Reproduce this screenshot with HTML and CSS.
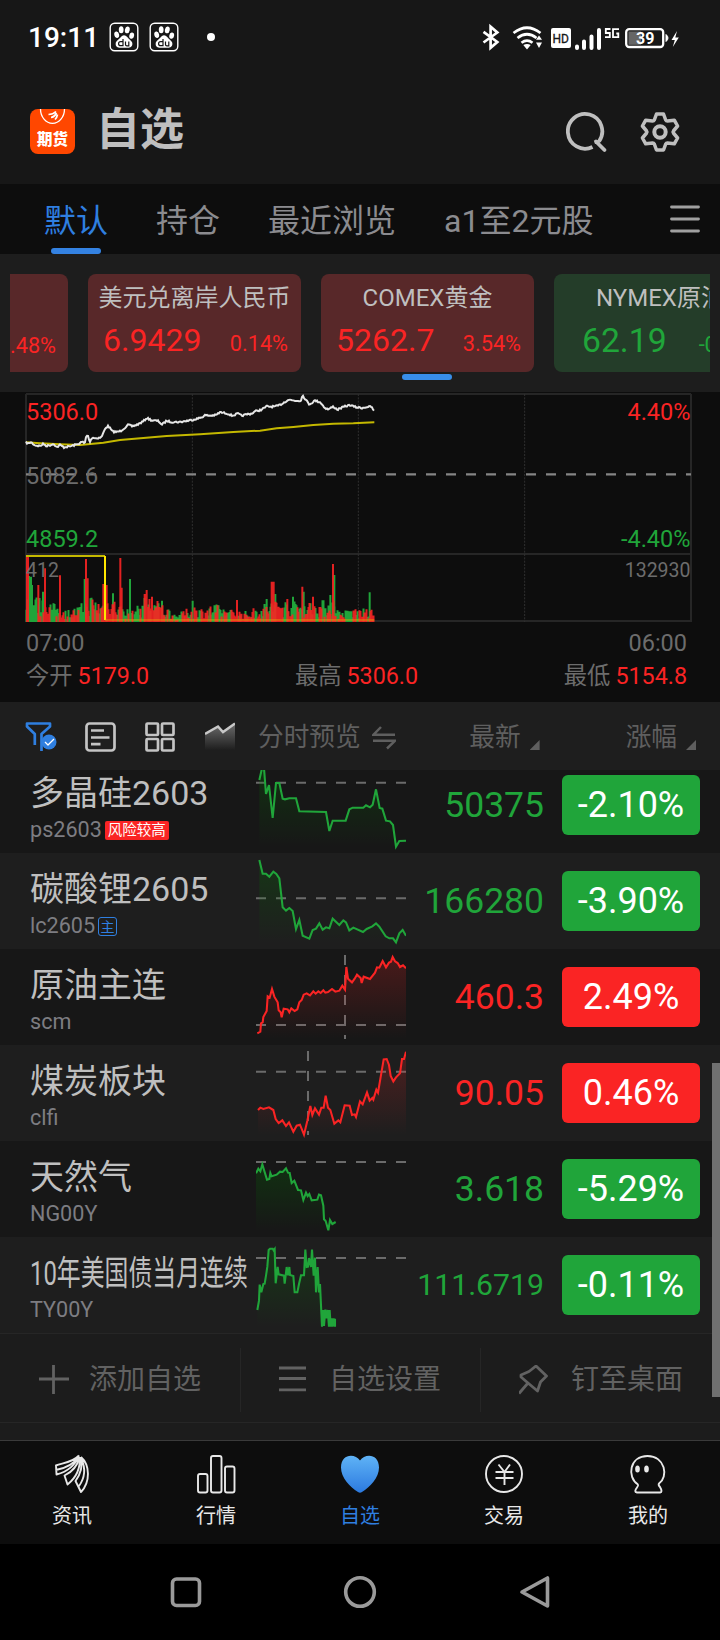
FILE: index.html
```html
<!DOCTYPE html>
<html lang="zh-CN">
<head>
<meta charset="utf-8">
<title>自选</title>
<link rel="stylesheet" href="styles.css">
</head>
<body>
<svg class="defs" width="0" height="0">
  <defs>
    <linearGradient id="gUp" x1="0" y1="0" x2="0" y2="1"><stop offset="0" stop-color="#fa2424" stop-opacity=".22"/><stop offset="1" stop-color="#fa2424" stop-opacity="0"/></linearGradient>
    <linearGradient id="gDown" x1="0" y1="0" x2="0" y2="1"><stop offset="0" stop-color="#007a00" stop-opacity=".26"/><stop offset="1" stop-color="#007a00" stop-opacity="0"/></linearGradient>
    <linearGradient id="gTrend" x1="0" y1="0" x2="0" y2="1"><stop offset="0" stop-color="#888" stop-opacity=".75"/><stop offset="1" stop-color="#888" stop-opacity="0"/></linearGradient>
    <linearGradient id="gHeart" x1="0" y1="0" x2="0" y2="1"><stop offset="0" stop-color="#5fb3f6"/><stop offset="1" stop-color="#2c7ae0"/></linearGradient>
    <symbol id="paw" viewBox="0 0 30 30">
      <rect x="1.2" y="1.2" width="27.6" height="27.6" rx="4.5" fill="none" stroke="#fff" stroke-width="1.4"/>
      <g fill="#fff">
        <ellipse cx="7.7" cy="12.8" rx="2.4" ry="3.3" transform="rotate(-12 7.7 12.8)"/>
        <ellipse cx="12.2" cy="7.8" rx="2.4" ry="3.5"/>
        <ellipse cx="18.3" cy="7.9" rx="2.4" ry="3.4" transform="rotate(12 18.3 7.9)"/>
        <ellipse cx="22.7" cy="13.6" rx="2.4" ry="3.2" transform="rotate(10 22.7 13.6)"/>
        <path d="M15 13.200c2.600 0 3.600 2.400 5.300 4 1.800 1.700 3.600 2.800 3 5.600-.8 3.600-4.600 3-8.300 3s-7.700.5-8.300-3c-.5-2.800 1.400-4.100 3.200-5.700 1.700-1.500 2.500-3.900 5.100-3.900z"/>
      </g>
      <path d="M14 17v6.700h-2.400a2 2 0 0 1 0-4H14M16.500 19.500v3q0 1.300 1.400 1.300h1.900v-4.300" fill="none" stroke="#171717" stroke-width="1.200"/>
    </symbol>
  </defs>
</svg>

<header class="status">
  <span class="clock">19:11</span>
  <svg class="paw" width="30" height="30"><use href="#paw"/></svg>
  <svg class="paw" width="30" height="30"><use href="#paw"/></svg>
  <span class="dot"></span>
  <svg class="status-icons" width="200" height="30" viewBox="0 0 200 30" fill="none" stroke="#fff">
    <path d="M3.500 9.800 17.300 20l-6.700 5.800V4.700l6.700 5.800L3.500 20.500" stroke-width="2.700"/>
    <path d="M33.500 11q13.500-10.500 27 0M37.500 16q9.500-7.500 19 0M41.500 20.700q5.500-4.200 11 0" stroke-width="2.700"/>
    <path d="M43.300 23q3.700-2 7.400 0L47 27.500zM56 17.800l3-4.300 3 4.300zM56 20.500l3 5.500 3-5.500z" fill="#fff" stroke="none"/>
    <rect x="71" y="6" width="20" height="20" rx="2" fill="#fff" stroke="none"/>
    <text x="72.500" y="20.500" class="hd">HD</text>
    <path d="M97 24.500v1.500M104 19.500v6.500M111.500 14.500V26M119 8v18" stroke-width="4" stroke-linecap="round"/>
    <path d="M130.500 7h-4.700v4h4v4.200H125M139 7.200h-6v8h5.300V11.500h-2" stroke-width="1.800"/>
    <rect x="146.200" y="7.200" width="37" height="17.800" rx="3" stroke-width="2.300"/>
    <rect x="148.500" y="9.500" width="12.500" height="13.300" fill="#666" stroke="none"/>
    <text x="156" y="21.700" class="batt">39</text>
    <path d="M186 12.500q4 3.500 0 7z" fill="#fff"/>
    <path d="M197 9l-5.500 9h3.300l-2 7 6-9.500h-3.500z" fill="#fff" stroke="none"/>
  </svg>
</header>

<section class="head">
  <div class="app-icon">
    <svg width="45" height="20" viewBox="0 0 45 20" fill="none" stroke="#fff">
      <path d="M10.500 0a12 14.300 0 0 0 24 0" stroke-width="1.300"/>
      <path d="M26 2.500q-3 3-7.500 3M26.500 4q-2 4-5.500 4.500M27.500 5.500q-.5 3-2.500 5" stroke-width="1.700"/>
    </svg>
    <b>期货</b>
  </div>
  <h1>自选</h1>
  <svg class="search" width="42" height="42" viewBox="0 0 42 42" fill="none" stroke="#bfbfbf" stroke-width="3.800">
    <path d="M26.500 36A17.200 17.400 0 1 1 33 30.500"/>
    <path d="M30 30.500 38.500 39" stroke-linecap="round"/><path d="M28.800 31h5"/>
  </svg>
  <svg class="gear" width="40" height="40" viewBox="0 0 40 40" fill="none" stroke="#bfbfbf" stroke-width="3.500">
    <path stroke-linejoin="round" d="M16.500 2h7l2.200 6q.5 1 1.700 1l6.900-.8 3.300 5.800-4.200 5q-.8 1 0 2l4.200 5-3.300 5.800-6.900-.8q-1.200 0-1.700 1l-2.200 6h-7l-2.200-6q-.5-1-1.700-1l-6.900.8L2.400 26l4.200-5q.8-1 0-2l-4.200-5 3.300-5.800 6.900.8q1.200 0 1.700-1z"/>
    <circle cx="20" cy="20" r="5.700" stroke-width="4"/>
  </svg>
</section>

<nav class="tabs">
  <span class="tab on">默认</span>
  <span class="tab">持仓</span>
  <span class="tab">最近浏览</span>
  <span class="tab">a1至2元股</span>
  <svg class="menu" width="30" height="28" viewBox="0 0 30 28" stroke="#a0a0a0" stroke-width="2.800" stroke-linecap="round"><path d="M1.500 2h27M1.500 14h27M1.500 26h27"/></svg>
</nav>

<section class="ticker">
  <div class="cards">
    <div class="card up first"><p><i>.48%</i></p></div>
    <div class="card up"><h3>美元兑离岸人民币</h3><p><b>6.9429</b><i>0.14%</i></p></div>
    <div class="card up"><h3>COMEX黄金</h3><p><b>5262.7</b><i>3.54%</i></p></div>
    <div class="card down"><h3>NYMEX原油</h3><p><b>62.19</b><i>-0</i></p></div>
  </div>
  <span class="pager"></span>
</section>

<section class="quote">
  <div class="plot">
    <svg id="plot" width="720" height="230" viewBox="0 21 2160 690" fill="none">
      <g stroke="#262626" stroke-width="6"><path d="M78 27H2073M78 507H2073M78 708H2073M78 27V711M2073 27V711"/></g>
      <path d="M577 27V711M1075 27V711M1574 27V711" stroke="#303030" stroke-width="3" stroke-dasharray="6 4"/>
      <path d="M78 268H2073" stroke="#858585" stroke-width="7" stroke-dasharray="30 30"/>
    </svg>
    <span class="lab l t1 up-t">5306.0</span><span class="lab r t1 up-t">4.40%</span>
    <span class="lab l t2">5082.6</span>
    <span class="lab l t3 down-t">4859.2</span><span class="lab r t3 down-t">-4.40%</span>
    <span class="lab l t4 small">412</span><span class="lab r t4 small">132930</span>
  </div>
  <div class="axis"><span>07:00</span><span>06:00</span></div>
  <div class="stats"><span>今开<b>5179.0</b></span><span>最高<b>5306.0</b></span><span>最低<b>5154.8</b></span></div>
</section>

<section class="toolbar">
  <svg width="152" height="32" viewBox="0 0 152 32" fill="none" stroke="#c4c4c4" stroke-width="2.700" stroke-linejoin="round">
    <path d="M9.800 25V14L2 6.500V3.500H25V6.500L16.500 14V31" stroke="#2f7fe0"/>
    <circle cx="24" cy="22" r="7.500" fill="#2f7fe0" stroke="none"/><path d="M20 22l3 3 6-6" stroke="#fff" stroke-width="1.300"/>
    <rect x="61.500" y="3.500" width="28" height="27" rx="3"/><path d="M66 10.500h13M66 17.500h18.500M66 24.200h9.500"/>
    <rect x="121.500" y="3.500" width="11.500" height="11.500" rx="1"/><rect x="137" y="3.500" width="11.500" height="11.500" rx="1"/>
    <rect x="121.500" y="19" width="11.500" height="11.500" rx="1"/><rect x="137" y="19" width="11.500" height="11.500" rx="1"/>
  </svg>
  <svg class="trend" width="30" height="28" viewBox="0 0 30 28"><path d="M0 12 13 4l5 5L30 1v27H0z" fill="url(#gTrend)"/><path d="M0 12 13 4.500l5 5.500L30 1.500" fill="none" stroke="#c8c8c8" stroke-width="2.500"/></svg>
  <span class="th-view">分时预览</span>
  <svg class="swap" width="24" height="24" viewBox="0 0 24 24" fill="none" stroke="#5f5f5f" stroke-width="2.500"><path d="M9 1 1.500 8.700H23M1 14.800h22L15 22.500"/></svg>
  <span class="th last">最新<i></i></span>
  <span class="th chg">涨幅<i></i></span>
</section>

<main class="list">
  <article class="row dark clip">
    <div class="name"><h2>多晶硅2603</h2><p>ps2603<em class="risk">风险较高</em></p></div>
    <svg width="150" height="96" viewBox="768 186 450 288"><path class="dash" d="M768 263H1218"/><path class="spark down" d="M778 255L786 220 792 220 798 297 807 270 818 369 828 264 838 264 848 311 855 313 868 310 888 310 898 349 978 351 988 408 998 377 1037 377 1048 343 1058 338 1090 338 1098 331 1110 337 1118 329 1128 283 1139 339 1147 341 1158 377 1170 379 1179 390 1188 455 1198 438 1218 437"/></svg>
    <span class="price down-t">50375</span><span class="badge green">-2.10%</span>
  </article>
  <article class="row">
    <div class="name"><h2>碳酸锂2605</h2><p>lc2605<em class="main">主</em></p></div>
    <svg width="150" height="96" viewBox="768 474 450 288"><path class="dash" d="M768 610H1218"/><path class="spark down" d="M778 495L788 536 798 536 808 545 820 530 829 537 838 550 848 637 858 647 868 639 878 648 888 702 898 675 908 722 928 731 938 705 948 701 958 685 968 704 978 697 988 700 998 671 1018 690 1030 676 1038 682 1048 706 1060 698 1089 711 1100 702 1117 694 1128 685 1138 695 1157 724 1168 730 1179 730 1188 742 1198 715 1208 705 1218 722"/></svg>
    <span class="price down-t">166280</span><span class="badge green">-3.90%</span>
  </article>
  <article class="row dark">
    <div class="name"><h2>原油主连</h2><p>scm</p></div>
    <svg width="150" height="96" viewBox="768 12 450 288"><path class="dash" d="M768 240H1218M1035 30V282"/><path class="spark up" d="M772 265L781 260 783 235 788 232 790 216 800 198 803 154 809 158 816 132 823 155 833 172 836 196 842 202 845 217 851 191 863 193 868 202 874 190 884 198 892 193 898 172 905 165 911 149 920 145 930 151 940 139 947 146 955 139 962 144 970 136 976 143 984 141 996 132 1006 140 1018 137 1027 122 1035 134 1039 66 1044 101 1056 112 1064 101 1071 89 1082 99 1085 114 1091 95 1110 102 1125 83 1131 67 1138 68 1148 48 1158 67 1167 53 1173 50 1178 36 1185 49 1193 54 1200 66 1209 61 1218 70"/></svg>
    <span class="price up-t">460.3</span><span class="badge red">2.49%</span>
  </article>
  <article class="row">
    <div class="name"><h2>煤炭板块</h2><p>clfi</p></div>
    <svg width="150" height="96" viewBox="768 300 450 288"><path class="dash" d="M768 380H1218M924 318V570"/><path class="spark up" d="M774 495L781 488 790 492 807 487 820 495 827 522 836 534 847 526 858 543 867 532 880 560 890 542 900 539 912 569 922 527 931 483 937 510 945 490 957 509 964 488 971 488 977 452 984 488 991 495 1003 536 1015 526 1021 532 1034 481 1049 482 1056 510 1064 508 1068 516 1080 469 1088 478 1101 442 1109 467 1117 459 1120 464 1129 434 1134 443 1151 343 1160 342 1167 360 1172 393 1180 409 1188 397 1200 385 1206 342 1212 342 1218 320"/></svg>
    <span class="price up-t">90.05</span><span class="badge red">0.46%</span>
  </article>
  <article class="row dark">
    <div class="name"><h2>天然气</h2><p>NG00Y</p></div>
    <svg width="150" height="96" viewBox="768 3 450 288"><path class="dash" d="M768 66H1218"/><path class="spark down" d="M768 100L775 86 781 94 787 73 793 93 801 119 808 117 811 99 815 109 830 104 840 95 848 96 858 85 864 98 869 99 875 129 883 122 894 150 903 151 910 180 918 158 923 168 928 162 935 181 952 179 957 164 963 166 970 197 972 238 977 243 985 271 990 240 997 252 1007 246"/></svg>
    <span class="price down-t">3.618</span><span class="badge green">-5.29%</span>
  </article>
  <article class="row">
    <div class="name"><h2 class="squeeze">10年美国债当月连续</h2><p>TY00Y</p></div>
    <svg width="150" height="96" viewBox="768 291 450 288"><path class="dash" d="M768 354H1218"/><path class="spark down" d="M772 510L777 482 779 434 784 457 790 432 794 431 798 407 802 380 806 330 810 326 818 326 821 331 824 327 827 430 833 381 836 403 852 407 854 431 860 381 864 406 868 381 870 405 880 408 884 457 892 457 897 432 903 406 912 406 916 329 920 381 924 380 927 354 933 381 936 329 941 407 945 353 948 457 953 381 957 457 960 432 966 560 970 510 972 558 976 509 979 535 983 510 987 560 989 510 992 560 995 535 998 560 1001 535 1005 560V536" /></svg>
    <span class="price long down-t">111.6719</span><span class="badge green">-0.11%</span>
  </article>
  <div class="actions">
    <span><svg width="30" height="30" viewBox="0 0 30 30"><path d="M0 14H30M14.500 0V29"/></svg>添加自选</span>
    <span><svg width="30" height="30" viewBox="0 0 30 30"><path d="M-.5 3H27M-.5 13.500H27M-.5 24.800H27"/></svg>自选设置</span>
    <span class="pin"><svg width="30" height="30" viewBox="0 0 30 30"><path stroke-linejoin="round" d="M0 28.500 9 18 2 12V10l8-3.500L17 1 27.500 11 21.500 17 18.500 26 9 18"/></svg>钉至桌面</span>
  </div>
</main>
<span class="scrollbar"></span>

<nav class="bottom">
  <a><svg width="40" height="40" viewBox="0 0 40 40"><path stroke-linejoin="round" d="M27 1.500C20 9 10 9 4 11.500L4.500 20.500C14 18 23 12 27 1.500M4 16C14 14 22 10 26 3M27.500 3C25 14 18 19 12.500 21.500L15.500 30.500C25 23 28.500 14 27.800 3M29 3C31 13 28 21 23.500 27L29 38C38.500 28 38 11 29 3M27 32C33.500 23 33 13 29.500 5"/></svg>资讯</a>
  <a><svg width="40" height="40" viewBox="0 0 40 40"><rect x="2" y="20" width="9.500" height="18.500" rx="2"/><rect x="15" y="2" width="10.500" height="36.500" rx="2"/><rect x="29" y="12.500" width="9.500" height="26" rx="2"/></svg>行情</a>
  <a class="on"><svg width="40" height="40" viewBox="0 0 40 40"><path fill="url(#gHeart)" stroke="none" d="M20 6.500C25-1 39-.5 39 13.500 39 24 30 33 22 38q-2 1.300-4 0C10 33 1 24 1 13.500 1-.5 15-1 20 6.500z"/></svg>自选</a>
  <a><svg width="40" height="40" viewBox="0 0 40 40"><circle cx="20" cy="20" r="18"/><path d="M14.500 10.500 20.500 18 26 10.500M20.500 18V31M11.500 18H29.500M11.500 24H29.500"/></svg>交易</a>
  <a><svg width="40" height="40" viewBox="0 0 40 40"><path stroke-linejoin="round" d="M10 30.500C-1.500 23 1.500 2 19.500 2S40.500 23 31 29.500Q30 31 32 33 35 38 32 38.500H9Q5.500 38 9 33.500 10.500 31.500 10 30.500"/><ellipse cx="9.500" cy="15" rx="1.400" ry="2.600" fill="#e8e8e8"/><ellipse cx="18.500" cy="15" rx="1.400" ry="2.600" fill="#e8e8e8"/></svg>我的</a>
</nav>
<footer class="system">
  <svg width="34" height="34" viewBox="0 0 34 34"><rect x="4.500" y="4" width="27" height="26.500" rx="4"/></svg>
  <svg width="34" height="34" viewBox="0 0 34 34"><circle cx="17" cy="17" r="14.300"/></svg>
  <svg width="34" height="34" viewBox="0 0 34 34"><path stroke-linejoin="round" d="M29.500 3V31L4 17z"/></svg>
</footer>
<script src="chart.js"></script>
</body>
</html>
```
FILE: styles.css
```css
* { box-sizing: border-box; margin: 0; padding: 0; }
body { width: 720px; height: 1640px; overflow: hidden; position: relative; background: #171717; font-family: Roboto, "Noto Sans CJK SC", sans-serif; color: #bfbfbf; }
svg { display: block; flex: none; }
i, em { font-style: normal; }
.defs { position: absolute; }
.up-t { color: #fa2424 !important; }
.down-t { color: #20a53a !important; }

.status { height: 79px; padding: 0 40px 5px 28px; display: flex; align-items: center; color: #fff; }
.clock { width: 81px; font-size: 28px; font-weight: 500; line-height: 40px; padding-top: 2px; }
.paw { margin-right: 10px; }
.dot { width: 8px; height: 8px; margin-left: 18px; border-radius: 50%; background: #fff; }
.status-icons { margin-left: auto; }
.hd { font-size: 12px; fill: #171717; stroke: #171717; stroke-width: .3px; }
.batt { font-size: 16px; font-weight: 700; fill: #fff; stroke: none; }

.head { height: 105px; padding: 0 40px 0 30px; display: flex; align-items: center; }
.app-icon { width: 45px; height: 45px; border-radius: 8px; overflow: hidden; background: #ff4700; color: #fff; }
.app-icon b { display: block; font-family: "Noto Sans CJK SC", sans-serif; font-size: 15.5px; font-weight: 900; line-height: 18px; text-align: center; }
.head h1 { margin: -3px auto 0 21px; font-size: 44px; font-weight: 700; line-height: 60px; }
.search { margin-right: 32px; }

.tabs { height: 70px; padding: 0 20px 0 44px; display: flex; align-items: stretch; background: #0d0d0d; color: #8b8b8f; font-size: 32px; line-height: 74px; }
.tab { margin-right: 48px; white-space: nowrap; }
.tab.on { color: #2f7fe0; display: flex; flex-direction: column; align-items: center; }
.tab.on::after { content: ""; width: 50px; height: 6px; margin-top: -10px; border-radius: 3px; background: #3482e2; }
.menu { margin: 21px 0 0 auto; }

.ticker { height: 138px; padding: 20px 10px 0; background: #1d1d1d; }
.cards { display: flex; gap: 20px; overflow: hidden; }
.card { flex: none; width: 213px; height: 98px; padding-top: 5px; border-radius: 8px; white-space: nowrap; }
.card.first { width: 58px; padding-top: 43px; border-radius: 0 8px 8px 0; }
.card.first p { padding: 5px 12px 0 0; justify-content: flex-end; }
.card.up { background: #582829; color: #fa2424; }
.card.down { width: 156px; background: #243d29; color: #20a53a; border-radius: 8px 0 0 8px; }
.card h3 { font-size: 24px; font-weight: 400; line-height: 38px; text-align: center; color: #bfbfbf; }
.card.down h3 { width: 213px; }
.card p { display: flex; align-items: baseline; justify-content: space-between; padding: 0 13px 0 15px; line-height: 47px; }
.card b { font-size: 32px; font-weight: 400; }
.card.down p { padding: 0 0 0 28px; justify-content: flex-start; gap: 32px; }
.card.down b { font-size: 33.7px; }
.card i { font-size: 21.7px; }
.pager { display: block; width: 50px; height: 6px; margin: 2px 0 0 392px; border-radius: 3px; background: #388eea; }

.quote { height: 310px; background: #0d0d0d; color: #6c6c6c; font-size: 23.5px; }
.plot { position: relative; height: 230px; }
.lab { position: absolute; line-height: 28px; }
.lab.l { left: 26px; }
.lab.r { right: 29.5px; }
.t1 { top: 6px; }
.t2 { top: 70px; }
.t3 { top: 133px; }
.t4 { top: 165px; }
.small { font-size: 19.5px; }
.axis, .stats { display: flex; justify-content: space-between; padding: 0 33px 0 26px; }
.axis { padding-top: 6px; line-height: 30px; }
.stats { line-height: 36px; font-size: 23.3px; }
.stats b { margin-left: 5px; font-weight: 400; color: #fa2424; }

.toolbar { height: 68px; padding: 0 24px 0 25px; display: flex; align-items: center; background: #1e1e1e; color: #5f5f5f; font-size: 25.7px; line-height: 30px; }
.trend { margin-left: 28px; }
.th-view { margin: 2px 0 0 23px; }
.swap { margin: 3px 0 0 11px; }
.th { display: flex; align-items: center; margin-top: 2px; }
.th i { width: 10px; height: 10px; margin: 16px 0 0 9px; background: #5f5f5f; clip-path: polygon(100% 0, 100% 100%, 0 100%); }
.last { margin-left: auto; }
.chg { margin-left: 86px; }

.list { height: 670px; overflow: hidden; background: #1c1c1c; }
.row { height: 96px; display: flex; background: #1e1e1e; }
.row.dark { background: #171717; }
.row.clip { margin-top: -13px; }
.name { width: 256px; padding: 16px 0 0 30px; white-space: nowrap; }
.name h2 { font-size: 34px; font-weight: 400; line-height: 40px; }
.name h2.squeeze { width: 310px; transform: scaleX(.702); transform-origin: left; }
.name p { display: flex; align-items: center; margin-top: 3px; font-size: 21.6px; line-height: 27px; color: #7d7d82; }
.risk { height: 19px; margin: 1px 0 0 3px; padding: 0 3px; border-radius: 2px; background: #fa2424; color: #fff; font-size: 14.5px; line-height: 19px; }
.main { width: 19px; height: 19px; margin: 2px 0 0 3px; border: 1px solid #2f7fe0; border-radius: 3px; color: #2f7fe0; font-size: 14px; line-height: 18px; text-align: center; }
.dash { fill: none; stroke: #6b6b6b; stroke-width: 6; stroke-dasharray: 30 30; }
.spark { stroke-width: 6.2; fill: none; }
.spark.up { stroke: #fa2424; }
.spark.down { stroke: #20a53a; }
.area-up { fill: url(#gUp); }
.area-down { fill: url(#gDown); }
.price { width: 138px; text-align: right; font-size: 35.5px; line-height: 96px; }
.price.long { font-size: 30.2px; }
.badge { width: 138px; height: 60px; margin: 18px 0 0 18px; border-radius: 6px; color: #fff; font-size: 36px; line-height: 60px; text-align: center; }
.green { background: #20a53a; }
.red { background: #fa2424; }

.actions { height: 90px; padding: 14px 0 13px; display: grid; grid-template-columns: repeat(3, 1fr); border: solid #262626; border-width: 1px 0; color: #626262; font-size: 28px; line-height: 64px; }
.actions span { display: flex; align-items: center; gap: 20px; padding-left: 39px; }
.actions span + span { padding-left: 38px; border-left: 1px solid #262626; }
.actions .pin { gap: 22px; }
.actions svg { fill: none; stroke: #626262; stroke-width: 2.8; }
.scrollbar { position: absolute; left: 712px; top: 1063px; width: 8px; height: 334px; background: #707070; }

.bottom { height: 104px; padding-top: 13px; display: grid; grid-template-columns: repeat(5, 1fr); border-top: 1px solid #3a3a3a; background: #0d0d0d; color: #e8e8e8; font-size: 20px; line-height: 44px; }
.bottom a { display: flex; flex-direction: column; align-items: center; }
.bottom svg { fill: none; stroke: #e8e8e8; stroke-width: 1.9; }
.bottom .on { color: #2f7fe0; }
.system { height: 96px; padding: 0 168px; display: flex; align-items: center; justify-content: space-between; background: #000; }
.system svg { fill: none; stroke: #9a9a9a; stroke-width: 3.6; }
```
FILE: chart.js
```js
const NS = 'http://www.w3.org/2000/svg';
let seed = 7;
const rnd = () => (seed = (seed * 16807) % 2147483647) / 2147483647;
const plot = document.getElementById('plot');

function path(parent, attrs) {
  const el = document.createElementNS(NS, 'path');
  for (const k in attrs) el.setAttribute(k, attrs[k]);
  parent.appendChild(el);
  return el;
}
function at(points, x) {
  for (let i = 1; i < points.length; i++) {
    const [x0, y0] = points[i - 1], [x1, y1] = points[i];
    if (x <= x1) return y0 + (y1 - y0) * (x - x0) / (x1 - x0);
  }
  return points[points.length - 1][1];
}

// average price
path(plot, { stroke: '#c4b800', 'stroke-width': 6, d: 'M78 172L120 175 180 178 240 180 310 173 360 165 430 159 500 153 600 148 700 141 780 137 830 130 880 126 940 120 1000 116 1060 115 1123 112' });

// last price
const price = [[78,172],[85,176],[92,171],[105,181],[120,183],[130,177],[140,183],[162,177],[170,187],[180,180],[192,187],[210,184],[232,178],[248,170],[254,177],[259,152],[265,152],[268,172],[277,157],[287,160],[304,157],[317,128],[325,123],[337,139],[350,141],[362,138],[386,119],[395,124],[412,119],[430,109],[440,99],[455,106],[475,108],[486,119],[500,107],[512,111],[540,111],[575,105],[600,99],[615,91],[630,92],[648,90],[660,82],[680,85],[697,92],[713,86],[725,92],[745,87],[755,86],[765,79],[785,74],[800,64],[815,65],[830,64],[845,57],[865,44],[885,47],[902,47],[908,31],[920,48],[928,58],[945,47],[960,51],[975,69],[985,73],[1000,65],[1012,74],[1030,66],[1050,60],[1065,66],[1085,69],[1100,66],[1114,65],[1123,80]];
let d = '';
for (let x = 78; x <= 1123; x += 3) d += (d ? 'L' : 'M') + x + ' ' + (at(price, x) + (rnd() - .5) * 5).toFixed(1);
path(plot, { stroke: '#e6e6e6', 'stroke-width': 6, d });

// volume bars: a noisy floor with the notable spikes
const level = [[78,95],[110,75],[150,60],[200,35],[240,48],[265,85],[300,60],[330,80],[360,50],[400,32],[440,80],[490,54],[530,22],[580,50],[610,40],[640,54],[700,36],[740,32],[790,54],[830,68],[880,60],[920,62],[960,62],[1000,72],[1020,30],[1060,42],[1100,38],[1123,34]];
const spikes = [[81,513,0],[84,515,0],[87,573,1],[93,575,1],[96,600,1],[115,600,0],[129,620,1],[135,550,0],[180,571,0],[254,582,1],[258,522,0],[263,580,0],[310,597,0],[316,600,0],[320,600,0],[339,625,1],[361,519,0],[365,608,0],[390,582,1],[434,627,0],[440,615,0],[456,635,0],[486,647,1],[578,647,1],[711,645,0],[800,642,1],[815,590,0],[821,590,0],[826,627,1],[862,642,0],[879,635,1],[907,605,0],[911,620,1],[939,635,0],[991,630,1],[999,537,0],[1003,570,1],[1109,622,1]];
const bars = ['', ''];
for (let x = 79.5; x <= 1122; x += 3) {
  const h = at(level, x) * (.2 + rnd() * .85);
  bars[rnd() < .5 ? 0 : 1] += `M${x} 711v${-h.toFixed(1)}`;
}
for (const [x, y, c] of spikes) bars[c] += `M${x} 711V${y}`;
path(plot, { stroke: '#20a53a', 'stroke-width': 6, d: bars[1] });
path(plot, { stroke: '#fa2424', 'stroke-width': 6, d: bars[0], opacity: .9 });
path(plot, { stroke: '#c4b800', 'stroke-width': 5.5, d: 'M78 513H315' });
path(plot, { stroke: '#ffe600', 'stroke-width': 6, d: 'M315 513V705' });
path(plot, { stroke: '#e8b400', 'stroke-width': 5, d: 'M315 705H1123', opacity: .5 });

// shade below each row's sparkline down to the row floor
document.querySelectorAll('.spark').forEach(line => {
  const box = line.getBBox(), view = line.ownerSVGElement.viewBox.baseVal;
  const area = path(line.parentNode, {
    d: `${line.getAttribute('d').replace(/V536$/, '')}V${view.y + 270}H${box.x}Z`,
    class: line.classList.contains('up') ? 'area-up' : 'area-down'
  });
  line.parentNode.insertBefore(area, line);
});
```
